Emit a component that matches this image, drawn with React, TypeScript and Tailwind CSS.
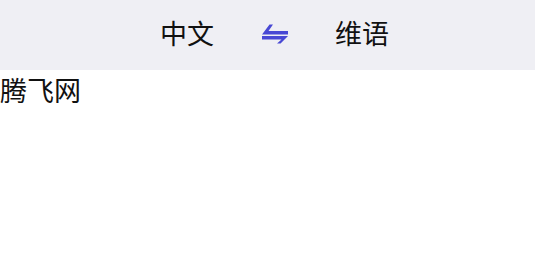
export default function App() {
  return (
    <div className="min-h-screen bg-white text-[#111] [font-family:'Noto_Sans_CJK_SC',sans-serif]">
      <div className="flex h-[70px] items-center justify-center bg-[#efeff4] pb-[3px] pl-[14px] text-[27px]">
        <span>中文</span>
        <svg className="ml-[48px] mr-[47px]" width="26" height="20" viewBox="0 0 26 20" fill="#4848d4">
          <polygon points="0,10.5 26,10.5 26,7 6.5,7 11,0.5 7.5,0.5" />
          <polygon points="26,12 0,12 0,15.5 19.5,15.5 15,19.5 18.5,19.5" />
        </svg>
        <span>维语</span>
      </div>
      <p className="text-[27px] leading-[40px]">腾飞网</p>
    </div>
  )
}
